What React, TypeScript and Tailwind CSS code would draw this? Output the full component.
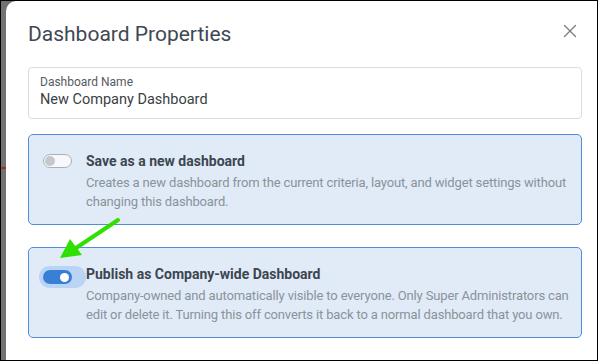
import { X } from "lucide-react";

type OptionProps = {
  title: string;
  text: string;
  on?: boolean;
};

function Toggle({ on }: { on?: boolean }) {
  if (on) {
    return (
      <div className="rounded-full bg-[#b9d4f4] p-[4px]">
        <div className="flex h-[14px] w-[29px] items-center justify-end rounded-full bg-[#3a7fd6] px-[3px]">
          <div className="h-[9px] w-[9px] rounded-full bg-white" />
        </div>
      </div>
    );
  }
  return (
    <div className="flex h-[14px] w-[29px] items-center rounded-full border border-[#a9b0b8] bg-[#f6f8fb] px-[1px]">
      <div className="h-[10px] w-[10px] rounded-full bg-[#c4c7cb]" />
    </div>
  );
}

function OptionCard({ title, text, on }: OptionProps) {
  return (
    <div className="flex h-[91px] rounded-[5px] border border-[#4f8fd6] bg-[#e0ebf7] pt-[18px]">
      <div className={on ? "w-[57px] pl-[10px]" : "w-[57px] pl-[14px] pt-[1px]"}>
        <Toggle on={on} />
      </div>
      <div className="flex-1 pr-[10px]">
        <div className="text-[14px] font-bold leading-[17px] text-[#3c4650]">{title}</div>
        <p className="mt-[3px] text-[13px] leading-[19px] tracking-[-0.15px] text-[#8a929b]">{text}</p>
      </div>
    </div>
  );
}

export default function App() {
  return (
    <div className="relative flex h-[361px] w-[598px] overflow-hidden border border-black bg-[#6f6f6f] font-['Roboto',sans-serif]">
      {/* page behind the modal */}
      <div className="relative w-[5px] shrink-0 bg-[#727272]">
        <div className="absolute left-0 top-[166px] h-[2px] w-[5px] bg-[#9a3414]" />
      </div>

      <div className="flex-1 rounded-tl-[10px] bg-white pl-[22px] pr-[15px] pt-[21px]">
        <div className="flex items-center justify-between">
          <h2 className="text-[21px] leading-[24px] text-[#3f4852]">Dashboard Properties</h2>
          <X className="mr-[1px] mt-[-6px] h-[22px] w-[22px] text-[#7c7c7c]" strokeWidth={1.4} />
        </div>

        <div className="mt-[21px] h-[52px] rounded-[4px] border border-[#dcdcdc] px-[11px] pt-[7px]">
          <div className="text-[12px] leading-[15px] text-[#555b61]">Dashboard Name</div>
          <div className="mt-[1px] text-[14.5px] leading-[18px] text-[#3a3f44]">New Company Dashboard</div>
        </div>

        <div className="mt-[15px]">
          <OptionCard
            title="Save as a new dashboard"
            text="Creates a new dashboard from the current criteria, layout, and widget settings without changing this dashboard."
          />
        </div>

        <div className="mt-[22px]">
          <OptionCard
            on
            title="Publish as Company-wide Dashboard"
            text="Company-owned and automatically visible to everyone. Only Super Administrators can edit or delete it. Turning this off converts it back to a normal dashboard that you own."
          />
        </div>
      </div>

      {/* annotation arrow */}
      <svg className="absolute left-0 top-0" width="598" height="361" viewBox="0 0 598 361">
        <line x1="117" y1="219" x2="72" y2="249" stroke="#2fe000" strokeWidth="4" strokeLinecap="round" />
        <polygon points="59,257 69,238 81,254" fill="#2fe000" />
      </svg>
    </div>
  );
}
